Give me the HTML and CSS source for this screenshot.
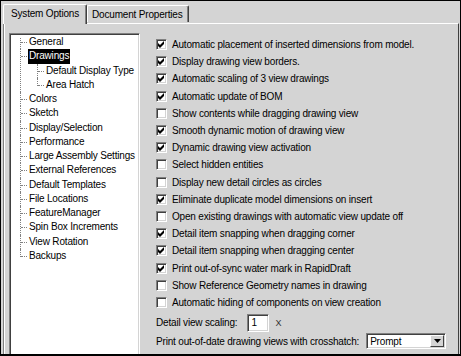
FILE: index.html
```html
<!DOCTYPE html>
<html>
<head>
<meta charset="utf-8">
<link rel="stylesheet" href="styles.css">
</head>
<body>
<div class="window">
  <div class="tabs">
    <div class="tab active">System Options</div>
    <div class="tab">Document Properties</div>
  </div>
  <div class="panel">
    <div class="tree">
      <ul class="tree-root">
        <li><span class="lbl">General</span></li>
        <li><span class="lbl sel">Drawings</span>
          <ul class="tree-sub">
            <li><span class="lbl">Default Display Type</span></li>
            <li><span class="lbl">Area Hatch</span></li>
          </ul>
        </li>
        <li><span class="lbl">Colors</span></li>
        <li><span class="lbl">Sketch</span></li>
        <li><span class="lbl">Display/Selection</span></li>
        <li><span class="lbl">Performance</span></li>
        <li><span class="lbl">Large Assembly Settings</span></li>
        <li><span class="lbl">External References</span></li>
        <li><span class="lbl">Default Templates</span></li>
        <li><span class="lbl">File Locations</span></li>
        <li><span class="lbl">FeatureManager</span></li>
        <li><span class="lbl">Spin Box Increments</span></li>
        <li><span class="lbl">View Rotation</span></li>
        <li><span class="lbl">Backups</span></li>
      </ul>
    </div>
    <div class="options">
      <div class="opt"><span class="cb on"><svg viewBox="0 0 9 9" width="9" height="9"><polygon points="1,3 3,5 7,1 7,4 3,8 1,6"/></svg></span>Automatic placement of inserted dimensions from model.</div>
      <div class="opt"><span class="cb on"><svg viewBox="0 0 9 9" width="9" height="9"><polygon points="1,3 3,5 7,1 7,4 3,8 1,6"/></svg></span>Display drawing view borders.</div>
      <div class="opt"><span class="cb on"><svg viewBox="0 0 9 9" width="9" height="9"><polygon points="1,3 3,5 7,1 7,4 3,8 1,6"/></svg></span>Automatic scaling of 3 view drawings</div>
      <div class="opt"><span class="cb on"><svg viewBox="0 0 9 9" width="9" height="9"><polygon points="1,3 3,5 7,1 7,4 3,8 1,6"/></svg></span>Automatic update of BOM</div>
      <div class="opt"><span class="cb"></span>Show contents while dragging drawing view</div>
      <div class="opt"><span class="cb on"><svg viewBox="0 0 9 9" width="9" height="9"><polygon points="1,3 3,5 7,1 7,4 3,8 1,6"/></svg></span>Smooth dynamic motion of drawing view</div>
      <div class="opt"><span class="cb on"><svg viewBox="0 0 9 9" width="9" height="9"><polygon points="1,3 3,5 7,1 7,4 3,8 1,6"/></svg></span>Dynamic drawing view activation</div>
      <div class="opt"><span class="cb"></span>Select hidden entities</div>
      <div class="opt"><span class="cb"></span>Display new detail circles as circles</div>
      <div class="opt"><span class="cb on"><svg viewBox="0 0 9 9" width="9" height="9"><polygon points="1,3 3,5 7,1 7,4 3,8 1,6"/></svg></span>Eliminate duplicate model dimensions on insert</div>
      <div class="opt"><span class="cb"></span>Open existing drawings with automatic view update off</div>
      <div class="opt"><span class="cb on"><svg viewBox="0 0 9 9" width="9" height="9"><polygon points="1,3 3,5 7,1 7,4 3,8 1,6"/></svg></span>Detail item snapping when dragging corner</div>
      <div class="opt"><span class="cb on"><svg viewBox="0 0 9 9" width="9" height="9"><polygon points="1,3 3,5 7,1 7,4 3,8 1,6"/></svg></span>Detail item snapping when dragging center</div>
      <div class="opt"><span class="cb on"><svg viewBox="0 0 9 9" width="9" height="9"><polygon points="1,3 3,5 7,1 7,4 3,8 1,6"/></svg></span>Print out-of-sync water mark in RapidDraft</div>
      <div class="opt"><span class="cb"></span>Show Reference Geometry names in drawing</div>
      <div class="opt"><span class="cb"></span>Automatic hiding of components on view creation</div>
      <div class="field field-scale">
        <span>Detail view scaling:</span>
        <span class="input">1</span>
        <span class="times">X</span>
      </div>
      <div class="field field-print">
        <span>Print out-of-date drawing views with crosshatch:</span>
        <span class="select"><span class="sel-text">Prompt</span><span class="sel-btn"><svg viewBox="0 0 7 4" width="7" height="4"><polygon points="0,0 7,0 3.5,4"/></svg></span></span>
      </div>
    </div>
  </div>
</div>
</body>
</html>
```

FILE: styles.css
```css
html, body {
  margin: 0;
  padding: 0;
  background: #d4d4d4;
}

.window {
  width: 461px;
  height: 356px;
  box-sizing: border-box;
  border: 1px solid #000;
  border-bottom-width: 2px;
  background: #d4d4d4;
  padding: 3px 1px 0 2px;
  overflow: hidden;
  font-family: "Liberation Sans", Arial, sans-serif;
  font-size: 10px;
  letter-spacing: -0.18px;
  color: #000;
  display: flex;
  flex-direction: column;
}

.tabs {
  display: flex;
  align-items: flex-end;
  height: 19px;
  position: relative;
  z-index: 1;
}

.tab {
  height: 16px;
  line-height: 15px;
  padding: 0 6px 0 7px;
  border-top: 1px solid #fff;
  border-left: 1px solid #fff;
  border-right: 1px solid #404040;
  box-shadow: inset -1px 0 #808080;
  border-radius: 2px 2px 0 0;
  box-sizing: border-box;
  margin-bottom: -1px;
  background: #d4d4d4;
}

.tab.active {
  height: 20px;
  line-height: 17px;
  padding: 0 7px 0 7px;
  margin-bottom: -1px;
}

.tab + .tab {
  margin-left: 0;
  height: 17px;
  line-height: 17px;
  padding: 0 5px 0 4px;
  margin-bottom: 1px;
}

.panel {
  flex: 1;
  display: flex;
  border-top: 1px solid #fff;
  border-left: 1px solid #808080;
  box-shadow: inset 1px 0 #fff;
  border-right: 1px solid #404040;
  padding: 9px 0 0 5px;
  min-height: 0;
}

.tree {
  width: 131px;
  flex: none;
  box-sizing: border-box;
  background: #fff;
  border-top: 1px solid #808080;
  border-left: 1px solid #808080;
  border-right: 1px solid #fff;
  box-shadow: inset 1px 1px #404040, inset -1px 0 #d4d4d4;
  padding: 1px 0 0 1px;
  margin-bottom: -4px;
}

.tree ul {
  list-style: none;
  margin: 0;
  padding: 0;
}

.tree-root {
  padding-left: 18px !important;
}

.tree li {
  position: relative;
  line-height: 14.27px;
  white-space: nowrap;
}

.tree li::before {
  content: "";
  position: absolute;
  left: -9px;
  top: 0;
  height: 100%;
  border-left: 1px dotted #808080;
}

.tree li::after {
  content: "";
  position: absolute;
  left: -8px;
  top: 7px;
  width: 6px;
  border-top: 1px dotted #808080;
}

.tree-root > li:first-child::before {
  top: 3px;
  height: calc(100% - 3px);
}

.tree li:last-child::before {
  height: 8px;
}

.tree-sub {
  padding-left: 17px !important;
}

.tree-sub li::before {
  left: -9px;
}

.lbl {
  display: inline-block;
  padding: 0 1px;
  margin-left: -1px;
}

.lbl.sel {
  background: #000;
  color: #fff;
}

.options {
  flex: 1;
  padding: 3px 0 0 16px;
  min-width: 0;
}

.opt {
  display: flex;
  align-items: center;
  height: 17.2px;
  white-space: nowrap;
}

.cb {
  width: 11px;
  height: 11px;
  flex: none;
  box-sizing: border-box;
  background: #fff;
  border-top: 1px solid #808080;
  border-left: 1px solid #808080;
  border-right: 1px solid #fff;
  border-bottom: 1px solid #fff;
  box-shadow: inset 1px 1px #404040, inset -1px -1px #d4d4d4;
  margin-right: 5px;
  display: flex;
  align-items: center;
  justify-content: center;
}

.cb svg {
  display: block;
  fill: #000;
}

.field {
  display: flex;
  align-items: center;
  white-space: nowrap;
}

.field-scale {
  height: 19px;
  margin-top: 2px;
}

.input {
  width: 22px;
  height: 18px;
  box-sizing: border-box;
  background: #fff;
  border-top: 1px solid #808080;
  border-left: 1px solid #808080;
  border-right: 1px solid #fff;
  border-bottom: 1px solid #fff;
  box-shadow: inset 1px 1px #404040, inset -1px -1px #d4d4d4;
  margin-left: 10px;
  padding-left: 3px;
  line-height: 16px;
}

.times {
  margin-left: 6px;
  font-size: 9px;
  color: #303030;
}

.field-print {
  height: 18px;
}

.select {
  margin-left: 7px;
  width: 80px;
  height: 16px;
  box-sizing: border-box;
  background: #fff;
  border-top: 1px solid #808080;
  border-left: 1px solid #808080;
  border-right: 1px solid #fff;
  border-bottom: 1px solid #fff;
  box-shadow: inset 1px 1px #404040, inset -1px -1px #d4d4d4;
  display: flex;
  align-items: stretch;
  padding: 1px;
}

.sel-text {
  flex: 1;
  padding-left: 2px;
  line-height: 13px;
}

.sel-btn {
  width: 14px;
  box-sizing: border-box;
  background: #d4d4d4;
  border-top: 1px solid #fff;
  border-left: 1px solid #fff;
  border-right: 1px solid #404040;
  border-bottom: 1px solid #404040;
  display: flex;
  align-items: center;
  justify-content: center;
}

.sel-btn svg {
  display: block;
  fill: #000;
}
```
